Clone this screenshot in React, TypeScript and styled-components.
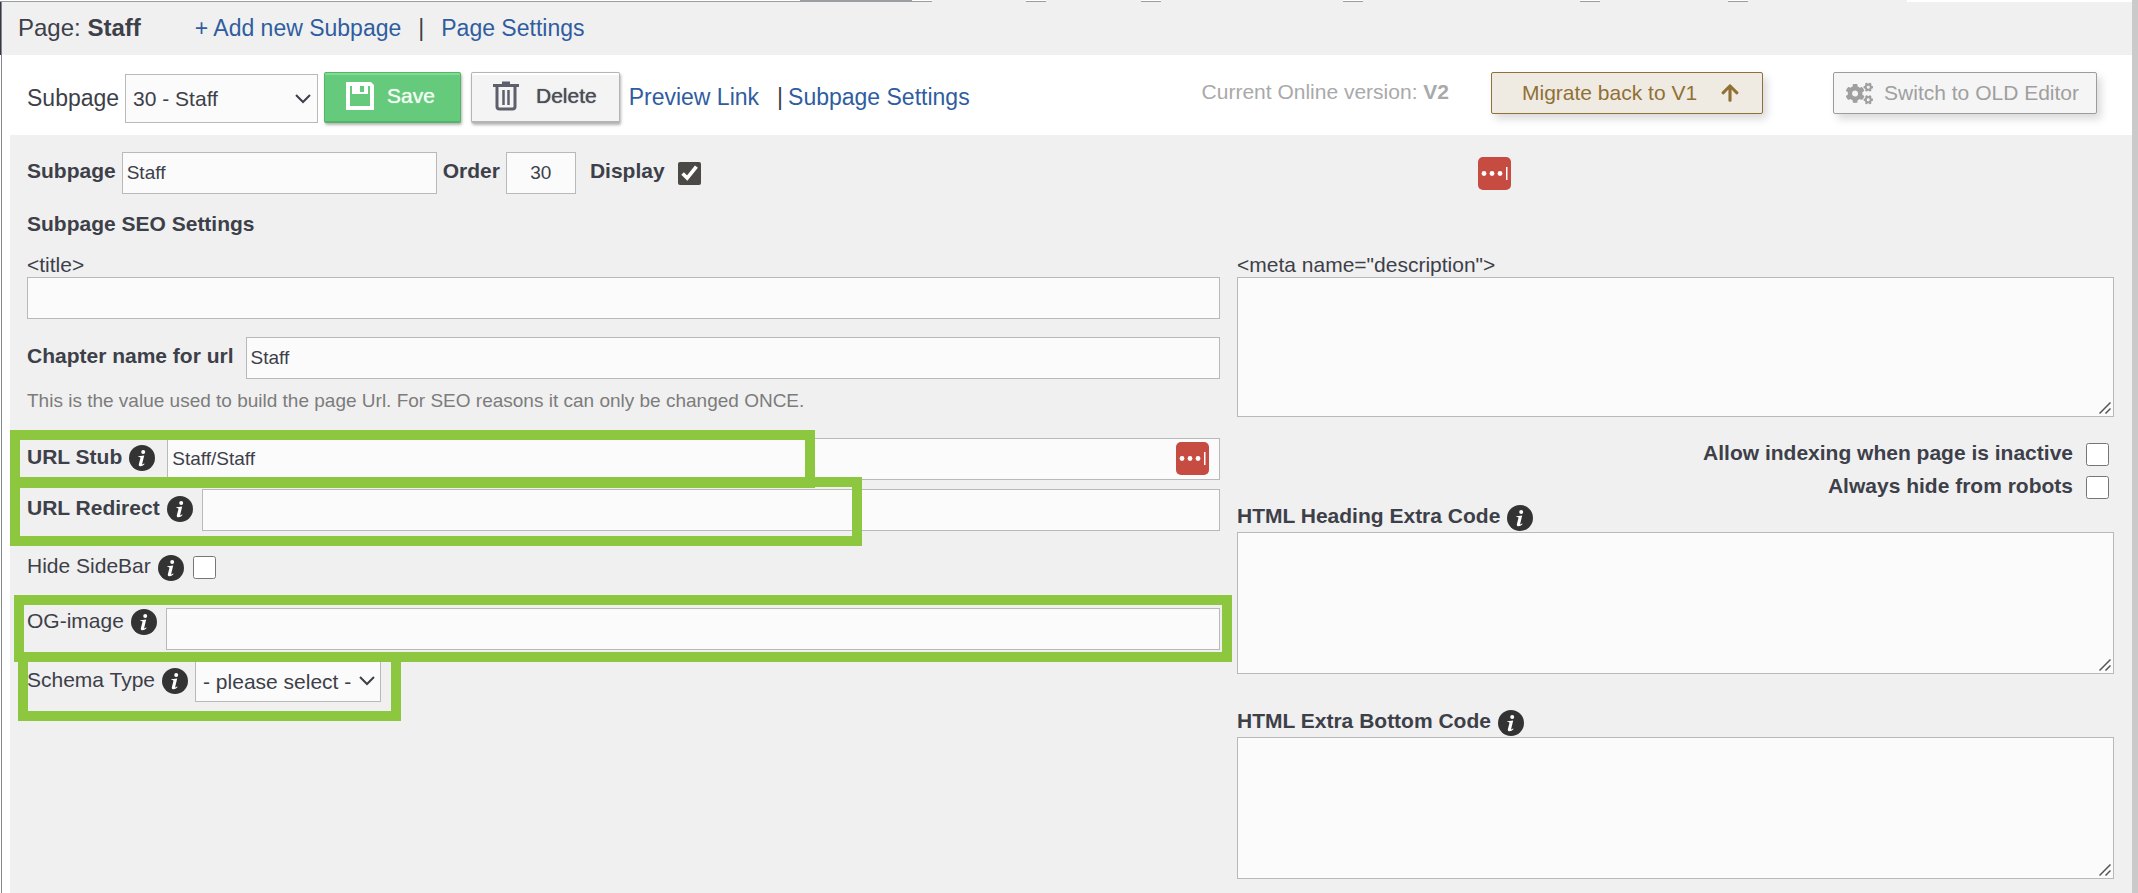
import React from "react";
import styled, { createGlobalStyle } from "styled-components";
import { FaArrowUp, FaCogs } from "react-icons/fa";

const ink = "#3d3f49";
const link = "#2f5d9f";
const line = "#b9b9b9";
const panel = "#f0f0f0";
const field = "#fbfbfb";
const green = "#8dc63f";

const Global = createGlobalStyle`
  *, *::before, *::after { box-sizing: border-box; }
  body {
    margin: 0;
    background: #fff;
    color: ${ink};
    font-family: "Liberation Sans", Arial, sans-serif;
    font-size: 21px;
  }
  input, select, textarea, button { font-family: inherit; color: inherit; margin: 0; }
  a { color: ${link}; text-decoration: none; }
`;

const Page = styled.div`
  min-height: 100vh;
  display: flex;
  flex-direction: column;
  border-right: 6px solid #cacaca;
`;

const TabStrip = styled.div`
  height: 2px;
  flex: none;
  display: flex;
  gap: 20px;
  padding-left: 800px;
  background: linear-gradient(#fff 1px, #9b9ea1 1px) 0 0 / 1906px 2px no-repeat;
  overflow: hidden;
`;

const Tab = styled.span<{ $width: number; $active?: boolean }>`
  flex: none;
  width: ${(p) => p.$width}px;
  background: ${(p) => (p.$active ? "#9b9ea1" : panel)};
`;

const Header = styled.header`
  display: flex;
  align-items: center;
  height: 53px;
  padding: 0 17px 2px;
  border-left: 1px solid #353846;
  box-shadow: inset 1px 0 0 #85868c;
  background: ${panel};
  font-size: 23px;
  line-height: 26px;
  white-space: pre;
`;

const PageName = styled.span`
  font-size: 24px;
`;

const HeaderLinks = styled.nav`
  margin-left: 54px;
  display: flex;
  gap: 17px;
`;

const Body = styled.main`
  flex: 1;
  display: flex;
  flex-direction: column;
  margin-left: 1px;
  padding-left: 8px;
  border-left: 1px solid #85868c;
`;

const Toolbar = styled.div`
  display: flex;
  align-items: flex-start;
  height: 80px;
  padding: 17px 35px 0 17px;
  font-size: 23px;
  white-space: nowrap;
`;

const ToolLabel = styled.label`
  margin-right: 6px;
  line-height: 52px;
`;

const SelectWrap = styled.span<{ $tool?: boolean }>`
  position: relative;
  display: block;
  width: ${(p) => (p.$tool ? 193 : 186)}px;
  margin: ${(p) => (p.$tool ? "2px 6px 0 0" : "0")};
  svg {
    position: absolute;
    right: ${(p) => (p.$tool ? 7 : 6)}px;
    top: 50%;
    margin-top: -5px;
    pointer-events: none;
  }
`;

const Select = styled.select<{ $tall?: boolean }>`
  appearance: none;
  display: block;
  width: 100%;
  height: ${(p) => (p.$tall ? 49 : 42)}px;
  padding: 0 7px;
  border: 1px solid ${line};
  border-radius: 0;
  background: ${field};
  font-size: 21px;
`;

const ActionButton = styled.button<{ $primary?: boolean }>`
  display: flex;
  align-items: center;
  gap: ${(p) => (p.$primary ? 13 : 17)}px;
  height: 51px;
  margin-right: ${(p) => (p.$primary ? 10 : 9)}px;
  padding: ${(p) => (p.$primary ? "0 25px 2px 21px" : "0 22px 2px 21px")};
  border: 1px solid ${(p) => (p.$primary ? "#54b468" : "#b4b4b4")};
  border-bottom-width: 2px;
  border-radius: 2px;
  background: ${(p) => (p.$primary ? "#65ca7b" : "#f4f4f4")};
  box-shadow: ${(p) => (p.$primary ? "inset 0 2px 0 #7fdc93," : "inset 0 2px 0 #fff,")} 1px 2px 3px rgba(0, 0, 0, 0.3);
  color: ${(p) => (p.$primary ? "#f1fff3" : "#4c4e57")};
  font-size: 21px;
  text-shadow: 0 0 1px currentColor;
`;

const ToolLinks = styled.nav`
  display: flex;
  line-height: 50px;
  gap: 5px;
  a:first-child { margin-right: 13px; }
`;

const Version = styled.p`
  margin: 0 42px 0 auto;
  font-size: 21px;
  line-height: 40px;
  color: #a9a9a9;
`;

const OutlineButton = styled.button<{ $gold?: boolean }>`
  display: flex;
  align-items: center;
  height: 42px;
  gap: ${(p) => (p.$gold ? 23 : 11)}px;
  padding: ${(p) => (p.$gold ? "0 22px 0 30px" : "0 17px 0 12px")};
  margin-right: ${(p) => (p.$gold ? 70 : 0)}px;
  border: 1px solid ${(p) => (p.$gold ? "#8f7136" : "#9c9c9c")};
  border-radius: 2px;
  background: ${(p) => (p.$gold ? "#f0ebe2" : "#f5f5f5")};
  color: ${(p) => (p.$gold ? "#8f7136" : "#9f9f9f")};
  box-shadow: 4px 5px 9px rgba(0, 0, 0, 0.15);
  font-size: 21px;
`;

const Panel = styled.form`
  flex: 1;
  padding: 17px 18px 14px 17px;
  background: ${panel};
`;

const Columns = styled.div`
  display: grid;
  grid-template-columns: minmax(0, 1193fr) minmax(0, 877fr);
  column-gap: 17px;
`;

const Column = styled.div`
  display: flex;
  flex-direction: column;
`;

const Row = styled.div<{ $after?: number; $fit?: boolean }>`
  position: relative;
  display: flex;
  align-items: flex-start;
  align-self: ${(p) => (p.$fit ? "flex-start" : "stretch")};
  margin-bottom: ${(p) => p.$after ?? 0}px;
`;

const FieldLabel = styled.label<{ $bold?: boolean; $line?: number; $gap?: number }>`
  flex: none;
  margin-right: ${(p) => p.$gap ?? 6}px;
  font-weight: ${(p) => (p.$bold ? 700 : 400)};
  line-height: ${(p) => p.$line ?? 38}px;
  white-space: nowrap;
`;

const TextInput = styled.input<{ $width?: number; $center?: boolean }>`
  display: block;
  flex: ${(p) => (p.$width ? "none" : "1")};
  width: ${(p) => (p.$width ? p.$width + "px" : "100%")};
  min-width: 0;
  height: 42px;
  padding: 0 4px;
  border: 1px solid ${line};
  border-radius: 0;
  background: ${field};
  font-size: 19px;
  text-align: ${(p) => (p.$center ? "center" : "left")};
`;

const Check = styled.input`
  flex: none;
  width: 23px;
  height: 23px;
  accent-color: #4b4946;
`;

const InlineGroup = styled.div`
  display: flex;
  align-items: flex-start;
  margin-left: 6px;
`;

const DisplayGroup = styled(InlineGroup)`
  margin-left: 14px;
  ${Check} { margin: 10px 0 0 7px; }
`;

const Heading = styled.h2`
  margin: 0;
  padding: 18px 0 17px;
  font-size: 21px;
  line-height: 24px;
`;

const Hint = styled.p`
  margin: 0 0 25px;
  padding-top: 10px;
  font-size: 19px;
  line-height: 24px;
  color: #7c7c7c;
`;

const InfoButton = styled.button<{ $line?: number; $gap?: number }>`
  flex: none;
  display: flex;
  align-items: center;
  height: ${(p) => (p.$line ?? 38) + 2}px;
  margin-left: 1px;
  margin-right: ${(p) => p.$gap ?? 9}px;
  padding: 0;
  border: 0;
  background: none;
`;

const SidebarRow = styled(Row)`
  ${Check} { margin-top: 3px; }
`;

const Highlight = styled.span<{ $inset: string; $width?: string }>`
  position: absolute;
  z-index: 1;
  inset: ${(p) => p.$inset};
  width: ${(p) => p.$width ?? "auto"};
  border: 10px solid ${green};
  pointer-events: none;
`;

const FillButton = styled.button<{ $right: string; $top: number }>`
  position: absolute;
  right: ${(p) => p.$right};
  top: ${(p) => p.$top}px;
  padding: 0;
  border: 0;
  background: none;
  svg { display: block; }
`;

const AreaWrap = styled.div`
  position: relative;
  svg { position: absolute; right: 3px; bottom: 3px; pointer-events: none; }
`;

const Area = styled.textarea<{ $height: number }>`
  display: block;
  width: 100%;
  height: ${(p) => p.$height}px;
  padding: 4px;
  border: 1px solid ${line};
  border-radius: 0;
  background: ${field};
  font-size: 19px;
  resize: vertical;
  &::-webkit-resizer { background: transparent; }
`;

const Robots = styled.div`
  display: flex;
  flex-direction: column;
  align-items: flex-end;
  gap: 9px;
  padding: 24px 5px 6px 0;
`;

const RobotRow = styled.label`
  display: flex;
  gap: 13px;
  height: 24px;
  font-weight: 700;
  line-height: 24px;
  ${Check} { margin-top: 2px; }
`;

const AreaLabel = styled.div<{ $before?: number }>`
  display: flex;
  align-items: flex-start;
  height: 28px;
  margin-top: ${(p) => p.$before ?? 0}px;
`;

const Chevron = () => (
  <svg width="16" height="10" viewBox="0 0 16 10" fill="none" stroke={ink} strokeWidth="2" aria-hidden="true">
    <path d="M1 1l7 7 7-7" />
  </svg>
);

const Grip = () => (
  <svg width="12" height="12" viewBox="0 0 12 12" stroke="#555" strokeWidth="1.5" aria-hidden="true">
    <path d="M.5 11.5l11-11M6.500 11.500l5-5" />
  </svg>
);

const InfoIcon = () => (
  <svg width="26" height="26" viewBox="0 0 26 26" aria-hidden="true">
    <circle cx="13" cy="13" r="13" fill="#333" />
    <circle cx="14.200" cy="7" r="2" fill="#fff" />
    <path d="M9.400 11.200l5.800-.6-2 8.200c-.2.900.6.800 1.900-.2l.5.500c-1.600 1.800-3.200 2.400-4.500 2.200-1.200-.2-1.500-1.200-1.200-2.400l1.500-5.600c.2-.9-.4-1.100-2-1.200z" fill="#fff" />
  </svg>
);

const SaveIcon = () => (
  <svg width="28" height="28" viewBox="0 0 28 28" aria-hidden="true">
    <path fill="#fff" fillRule="evenodd" d="M0 0h25l3 3v25H0zM4 4v20h20V4h-2v8H6V4z" />
    <rect x="14" y="4" width="4" height="6" fill="#65ca7b" />
  </svg>
);

const TrashIcon = () => (
  <svg width="26" height="30" viewBox="0 0 26 30" fill="none" stroke="#5d606c" aria-hidden="true">
    <path d="M0 4.500h26M9 2h8" strokeWidth="3" />
    <path d="M4 6v19.500q0 2.500 2.500 2.500h13q2.500 0 2.500-2.500V6" strokeWidth="3" />
    <path d="M10.500 9v15M15.500 9v15" strokeWidth="2.500" />
  </svg>
);

const FillIcon = () => (
  <svg width="33" height="33" viewBox="0 0 33 33" aria-hidden="true">
    <rect width="33" height="33" rx="5" fill="#c64b40" />
    <g fill="#fff">
      <circle cx="6" cy="16.500" r="2.400" />
      <circle cx="14" cy="16.500" r="2.400" />
      <circle cx="22" cy="16.500" r="2.400" />
      <rect x="28" y="10" width="1.500" height="13" />
    </g>
  </svg>
);

function Info({ topic, height, gap }: { topic: string; height?: number; gap?: number }) {
  return (
    <InfoButton type="button" aria-label={`About ${topic}`} $line={height} $gap={gap}>
      <InfoIcon />
    </InfoButton>
  );
}

function CodeArea({ id, height }: { id: string; height: number }) {
  return (
    <AreaWrap>
      <Area id={id} $height={height} />
      <Grip />
    </AreaWrap>
  );
}

const tabWidths = [94, 95, 182, 217, 128, 159];

export default function App() {
  return (
    <Page>
      <Global />
      <TabStrip>
        <Tab $width={112} $active />
        {tabWidths.map((w) => (
          <Tab key={w} $width={w} />
        ))}
      </TabStrip>
      <Header>
        <PageName>Page: <b>Staff</b></PageName>
        <HeaderLinks>
          <a href="#add">+ Add new Subpage</a>
          <span>|</span>
          <a href="#page">Page Settings</a>
        </HeaderLinks>
      </Header>
      <Body>
        <Toolbar>
          <ToolLabel htmlFor="pick">Subpage</ToolLabel>
          <SelectWrap $tool>
            <Select id="pick" $tall>
              <option>30 - Staff</option>
            </Select>
            <Chevron />
          </SelectWrap>
          <ActionButton type="button" $primary><SaveIcon />Save</ActionButton>
          <ActionButton type="button"><TrashIcon />Delete</ActionButton>
          <ToolLinks>
            <a href="#preview">Preview Link</a>
            <span>|</span>
            <a href="#subpage">Subpage Settings</a>
          </ToolLinks>
          <Version>Current Online version: <b>V2</b></Version>
          <OutlineButton type="button" $gold>Migrate back to V1<FaArrowUp size={20} /></OutlineButton>
          <OutlineButton type="button"><FaCogs size={27} />Switch to OLD Editor</OutlineButton>
        </Toolbar>
        <Panel>
          <Row>
            <FieldLabel htmlFor="name" $bold>Subpage</FieldLabel>
            <TextInput id="name" defaultValue="Staff" $width={315} />
            <InlineGroup>
              <FieldLabel htmlFor="order" $bold>Order</FieldLabel>
              <TextInput id="order" defaultValue="30" $width={70} $center />
            </InlineGroup>
            <DisplayGroup>
              <FieldLabel htmlFor="display" $bold>Display</FieldLabel>
              <Check id="display" type="checkbox" defaultChecked />
            </DisplayGroup>
            <FillButton type="button" aria-label="Fill name" $right="28.9%" $top={5}><FillIcon /></FillButton>
          </Row>
          <Heading>Subpage SEO Settings</Heading>
          <Columns>
            <Column>
              <FieldLabel htmlFor="title" $line={24}>&lt;title&gt;</FieldLabel>
              <Row $after={18}><TextInput id="title" /></Row>
              <Row>
                <FieldLabel htmlFor="chapter" $bold $gap={12}>Chapter name for url</FieldLabel>
                <TextInput id="chapter" defaultValue="Staff" />
              </Row>
              <Hint>This is the value used to build the page Url. For SEO reasons it can only be changed ONCE.</Hint>
              <Row $after={9}>
                <FieldLabel htmlFor="stub" $bold>URL Stub</FieldLabel>
                <Info topic="URL Stub" gap={12} />
                <TextInput id="stub" defaultValue="Staff/Staff" />
                <FillButton type="button" aria-label="Fill URL stub" $right="11px" $top={4}><FillIcon /></FillButton>
                <Highlight $inset="-8px auto -8px -17px" $width="67.5%" />
              </Row>
              <Row $after={22}>
                <FieldLabel htmlFor="redirect" $bold>URL Redirect</FieldLabel>
                <Info topic="URL Redirect" />
                <TextInput id="redirect" />
                <Highlight $inset="-12px auto -15px -17px" $width="71.4%" />
              </Row>
              <SidebarRow $after={25}>
                <FieldLabel htmlFor="sidebar" $line={26}>Hide SideBar</FieldLabel>
                <Info topic="Hide SideBar" height={28} />
                <Check id="sidebar" type="checkbox" />
              </SidebarRow>
              <Row $after={10}>
                <FieldLabel htmlFor="og" $line={26}>OG-image</FieldLabel>
                <Info topic="OG-image" height={26} />
                <TextInput id="og" />
                <Highlight $inset="-13px -12px -12px -13px" />
              </Row>
              <Row $fit>
                <FieldLabel htmlFor="schema" $line={40}>Schema Type</FieldLabel>
                <Info topic="Schema Type" height={40} gap={7} />
                <SelectWrap>
                  <Select id="schema">
                    <option>- please select -</option>
                  </Select>
                  <Chevron />
                </SelectWrap>
                <Highlight $inset="-8px -20px -19px -9px" />
              </Row>
            </Column>
            <Column>
              <FieldLabel htmlFor="meta" $line={24}>&lt;meta name="description"&gt;</FieldLabel>
              <CodeArea id="meta" height={140} />
              <Robots>
                <RobotRow>Allow indexing when page is inactive<Check type="checkbox" /></RobotRow>
                <RobotRow>Always hide from robots<Check type="checkbox" /></RobotRow>
              </Robots>
              <AreaLabel>
                <FieldLabel htmlFor="head" $bold $line={24}>HTML Heading Extra Code</FieldLabel>
                <Info topic="HTML Heading Extra Code" height={26} />
              </AreaLabel>
              <CodeArea id="head" height={142} />
              <AreaLabel $before={35}>
                <FieldLabel htmlFor="bottom" $bold $line={24}>HTML Extra Bottom Code</FieldLabel>
                <Info topic="HTML Extra Bottom Code" height={26} />
              </AreaLabel>
              <CodeArea id="bottom" height={142} />
            </Column>
          </Columns>
        </Panel>
      </Body>
    </Page>
  );
}
